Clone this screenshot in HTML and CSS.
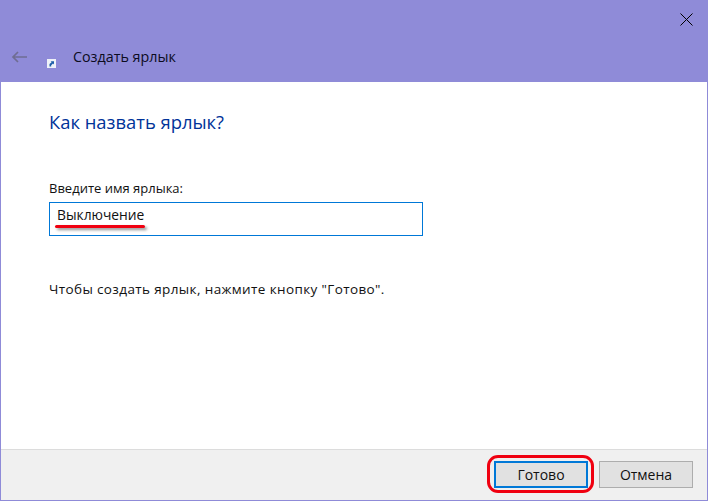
FILE: index.html
```html
<!DOCTYPE html>
<html lang="ru">
<head>
<meta charset="utf-8">
<title>Создать ярлык</title>
<link rel="stylesheet" href="styles.css">
</head>
<body>
<div class="window">
  <header class="header">
    <svg class="close" width="13" height="13" viewBox="0 0 13 13"><path d="M.5.5l12 12M12.5.5l-12 12" stroke="#000" stroke-width="1" fill="none"/></svg>
    <div class="titlebar">
      <svg class="back" width="16" height="12" viewBox="0 0 16 12"><path d="M16 6H2M7 1L2 6l5 5" stroke="#6f6d92" stroke-width="1.7" fill="none"/></svg>
      <svg class="shortcut" width="9" height="9" viewBox="0 0 9 9"><rect width="9" height="9" fill="#eef1f8"/><path d="M2.5 7.5V5L4.6 3.2 3.6 2.2H7V5.6L6 4.6 4.2 6.2V7.5z" fill="#1d5fa8"/></svg>
      <span class="title">Создать ярлык</span>
    </div>
  </header>
  <main class="content">
    <h1 class="heading">Как назвать ярлык?</h1>
    <label class="label">Введите имя ярлыка:</label>
    <div class="input">Выключение<span class="underline"></span></div>
    <p class="hint">Чтобы создать ярлык, нажмите кнопку "Готово".</p>
  </main>
  <footer class="footer">
    <button class="btn btn-primary">Готово<span class="ring"></span></button>
    <button class="btn">Отмена</button>
  </footer>
</div>
</body>
</html>
```
FILE: styles.css
```css
* { box-sizing: border-box; }
html, body { margin: 0; padding: 0; }
body { width: 708px; height: 501px; overflow: hidden; font-family: "Open Sans", "Noto Sans", sans-serif; color: #111; }
.window { height: 501px; display: flex; flex-direction: column; border: 1px solid #8f8bd8; border-top: 0; background: #fff; }
.header { height: 82px; margin: 0 -1px; background: #8f8bd8; position: relative; display: flex; align-items: flex-end; flex: none; }
.close { position: absolute; left: 680px; top: 13px; }
.titlebar { display: flex; align-items: center; height: 50px; width: 100%; position: relative; }
.back { margin-left: 11px; flex: none; }
.shortcut { margin-left: 20px; margin-top: 13px; flex: none; }
.title { margin-left: 17px; margin-top: -2px; font-size: 14.3px; color: #0c0c1e; }
.content { flex: 1; padding: 27px 0 0 48px; display: flex; flex-direction: column; align-items: flex-start; }
.heading { margin: 0; font-size: 18.4px; line-height: 25px; font-weight: 400; color: #003399; }
.label { margin-top: 45px; font-size: 13px; line-height: 18px; }
.input { margin-top: 5px; width: 374px; height: 34px; border: 1px solid #0078d7; padding-left: 7px; font-size: 13.8px; line-height: 24px; position: relative; }
.underline { position: absolute; left: 5px; top: 22px; width: 90px; height: 3px; border-radius: 2px; background: #f00010; box-shadow: 2px 2px 3px rgba(0,0,0,.45); }
.hint { margin: 44px 0 0; font-size: 13.5px; line-height: 18px; letter-spacing: .38px; }
.footer { flex: none; height: 51px; background: #f0f0f0; border-top: 1px solid #dcdcdc; display: flex; justify-content: flex-end; gap: 11px; padding: 11px 14px 0 0; }
.btn { width: 94px; height: 27px; padding: 0; background: #e1e1e1; border: 1px solid #adadad; font: 14px "Open Sans", "Noto Sans", sans-serif; color: #111; position: relative; }
.btn-primary { border: 2px solid #0078d7; }
.ring { position: absolute; left: -9px; top: -8px; width: 107px; height: 38px; border: 3px solid #f00010; border-radius: 11px; }
```
